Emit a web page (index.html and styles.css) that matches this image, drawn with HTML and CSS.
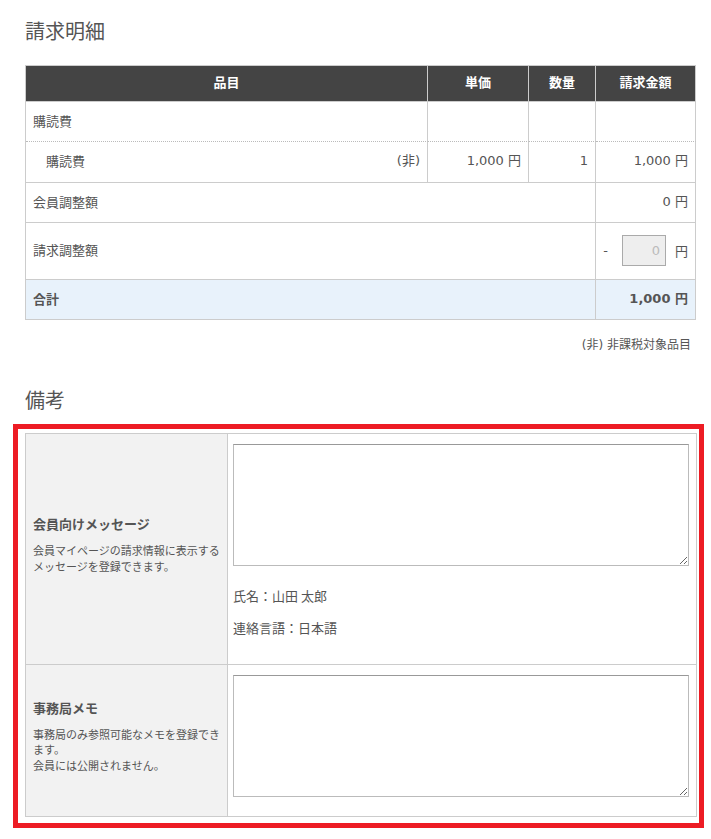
FILE: index.html
```html
<!DOCTYPE html>
<html lang="ja">
<head>
<meta charset="utf-8">
<title>請求明細</title>
<link rel="stylesheet" href="styles.css">
</head>
<body>
<div class="page">
  <h2 class="title">請求明細</h2>
  <table class="bill">
    <colgroup>
      <col class="c-item">
      <col class="c-price">
      <col class="c-qty">
      <col class="c-amount">
    </colgroup>
    <thead>
      <tr>
        <th>品目</th>
        <th>単価</th>
        <th>数量</th>
        <th>請求金額</th>
      </tr>
    </thead>
    <tbody>
      <tr class="r-group">
        <td>購読費</td>
        <td></td>
        <td></td>
        <td></td>
      </tr>
      <tr class="r-item">
        <td><div class="item-cell"><span class="item-name">購読費</span><span class="latin">(非)</span></div></td>
        <td class="num">1,000 円</td>
        <td class="num">1</td>
        <td class="num">1,000 円</td>
      </tr>
      <tr>
        <td colspan="3">会員調整額</td>
        <td class="num">0 円</td>
      </tr>
      <tr class="r-adjust">
        <td colspan="3">請求調整額</td>
        <td class="adj-cell">
          <div class="adj">
            <span class="minus">-</span>
            <input class="adj-input" type="text" placeholder="0">
            <span>円</span>
          </div>
        </td>
      </tr>
      <tr class="r-total">
        <td colspan="3">合計</td>
        <td class="num">1,000 円</td>
      </tr>
    </tbody>
  </table>
  <p class="note">(非) 非課税対象品目</p>

  <h2 class="title title-remarks">備考</h2>
  <div class="highlight">
    <table class="remarks">
      <colgroup>
        <col class="c-label">
        <col class="c-field">
      </colgroup>
      <tbody>
        <tr>
          <th class="label-cell">
            <p class="label">会員向けメッセージ</p>
            <p class="desc">会員マイページの請求情報に表示する<br>メッセージを登録できます。</p>
          </th>
          <td class="field-cell field-first">
            <textarea class="memo"></textarea>
            <p class="info info-first">氏名：山田 太郎</p>
            <p class="info">連絡言語：日本語</p>
          </td>
        </tr>
        <tr>
          <th class="label-cell">
            <p class="label">事務局メモ</p>
            <p class="desc">事務局のみ参照可能なメモを登録でき<br>ます。<br>会員には公開されません。</p>
          </th>
          <td class="field-cell field-second">
            <textarea class="memo"></textarea>
          </td>
        </tr>
      </tbody>
    </table>
  </div>
</div>
</body>
</html>
```

FILE: styles.css
```css
* {
  box-sizing: border-box;
}

html, body {
  margin: 0;
  padding: 0;
  background: #fff;
}

body {
  font-family: "Noto Sans CJK JP", "Noto Sans", sans-serif;
  font-size: 13px;
  color: #555;
}

.page {
  padding-left: 25px;
  padding-top: 17px;
  padding-bottom: 10px;
}

.title {
  margin: 0 0 20px 0;
  font-size: 20px;
  line-height: 28px;
  font-weight: normal;
  color: #555;
}

.title-remarks {
  margin-top: 31px;
  margin-bottom: 10px;
}

.latin,
.num,
.note,
.minus,
.adj-input {
  font-family: "DejaVu Sans", "Noto Sans CJK JP", sans-serif;
}

/* bill table */
.bill {
  width: 671px;
  table-layout: fixed;
  border-collapse: separate;
  border-spacing: 0;
  border-top: 1px solid #ccc;
  border-left: 1px solid #ccc;
}

.c-item { width: 402px; }
.c-price { width: 101px; }
.c-qty { width: 67px; }
.c-amount { width: 100px; }

.bill th,
.bill td {
  border-right: 1px solid #ccc;
  border-bottom: 1px solid #ccc;
}

.bill th {
  background: #444;
  color: #fff;
  font-weight: bold;
  font-size: 13px;
  line-height: 20px;
  padding: 6px 7px 9px;
  text-align: center;
}

.bill td {
  padding: 8px 7px 10px;
  line-height: 21px;
  vertical-align: middle;
  text-align: left;
}

.bill .r-group td {
  border-bottom: 1px dotted #bbb;
}

.bill .r-item td {
  padding: 9px 7px 11px;
  line-height: 20px;
}

.item-cell {
  display: flex;
  justify-content: space-between;
}

.item-name {
  padding-left: 13px;
}

.bill td.num {
  text-align: right;
}

.bill .r-adjust td {
  padding: 11px 7px 14px;
}

.bill .r-adjust td.adj-cell {
  padding: 12px 7px 13px;
}

.adj {
  display: flex;
  align-items: center;
  justify-content: flex-end;
  height: 31px;
}

.minus {
  margin-right: 14px;
}

.adj-input {
  width: 44px;
  height: 31px;
  margin: 0 9px 0 0;
  padding: 0 5px 0 0;
  border: 1px solid #aaa;
  background: #eee;
  font-size: 13px;
  text-align: right;
  color: #555;
}

.adj-input::placeholder {
  color: #bbb;
}

.bill .r-total td {
  background: #e8f2fb;
  font-weight: bold;
}

.note {
  width: 671px;
  margin: 15px 0 0 0;
  padding-right: 5px;
  font-size: 12px;
  line-height: 20px;
  text-align: right;
}

/* remarks */
.highlight {
  width: 691px;
  margin-left: -12px;
  border: 5px solid #ed1c24;
  padding: 4px 3px 6px 7px;
}

.remarks {
  width: 671px;
  table-layout: fixed;
  border-collapse: separate;
  border-spacing: 0;
  border-top: 1px solid #ccc;
  border-left: 1px solid #ccc;
}

.c-label { width: 202px; }
.c-field { width: 469px; }

.remarks th,
.remarks td {
  border-right: 1px solid #ccc;
  border-bottom: 1px solid #ccc;
}

.label-cell {
  background: #f2f2f2;
  padding: 0 7px;
  vertical-align: middle;
  text-align: left;
  font-weight: normal;
}

.label {
  margin: 0;
  font-size: 13px;
  line-height: 20px;
  font-weight: bold;
}

.desc {
  margin: 9px 0 10px;
  font-size: 11px;
  line-height: 15.5px;
  white-space: nowrap;
}

.field-cell {
  padding: 10px 5px 19px 5px;
  vertical-align: top;
}

.field-first {
  padding-bottom: 26px;
}

.memo {
  display: block;
  width: 456px;
  height: 122px;
  margin: 0;
  border: 1px solid #bbb;
  border-top-color: #999;
  background: #fff;
  font-family: "Noto Sans CJK JP", "Noto Sans", sans-serif;
  font-size: 13px;
}

.info {
  margin: 10px 0 0 0;
  font-size: 13px;
  line-height: 20px;
}

.info-first {
  margin-top: 20px;
}

.info-first + .info {
  margin-top: 12px;
}
```
